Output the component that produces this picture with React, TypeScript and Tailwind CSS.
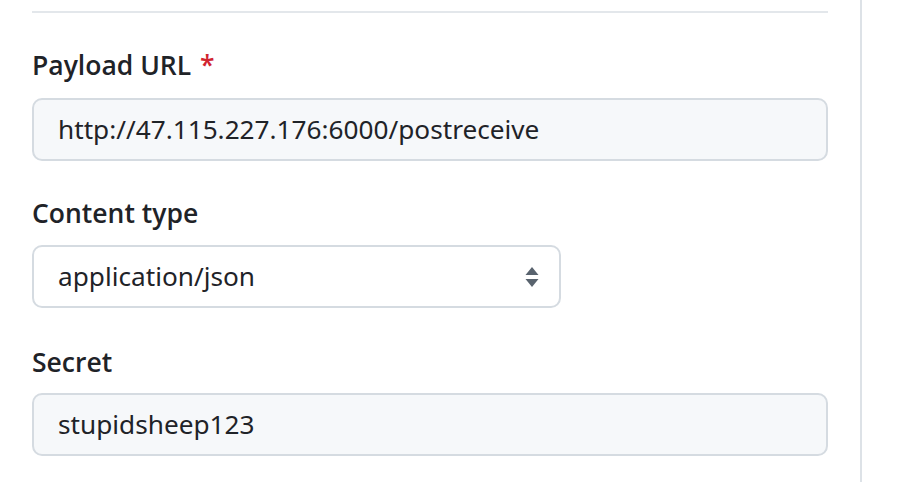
import React from "react";

function SelectArrows() {
  return (
    <svg width="14" height="22" viewBox="0 0 14 22" className="shrink-0">
      <path d="M0.5 9 L7 1 L13.5 9 Z" fill="#59636e" />
      <path d="M0.5 13 L13.5 13 L7 21 Z" fill="#59636e" />
    </svg>
  );
}

export default function App() {
  return (
    <div
      className="w-[909px] h-[482px] bg-white flex overflow-hidden text-[#1f2328]"
      style={{ fontFamily: '"Noto Sans", "Open Sans", sans-serif' }}
    >
      <div className="w-[860px] shrink-0 px-[32px] pt-[11px]">
        <div className="h-[2px] bg-[#e3e7eb]" />
        <div className="mt-[34px] flex flex-col">
          <div
            className="h-[36px] text-[26.5px] leading-[36px] font-semibold"
            style={{ fontFamily: '"Open Sans", "Noto Sans", sans-serif' }}
          >
            Payload URL <span className="ml-[2px] text-[#d1242f]">*</span>
          </div>
          <div className="mt-[15px] h-[63px] rounded-[10px] border-[2px] border-[#d5dbe1] bg-[#f6f8fa] flex items-center px-[24px] text-[26.2px]">
            http://47.115.227.176:6000/postreceive
          </div>

          <div
            className="mt-[34px] h-[36px] text-[26.5px] leading-[36px] font-semibold"
            style={{ fontFamily: '"Open Sans", "Noto Sans", sans-serif' }}
          >
            Content type
          </div>
          <div className="mt-[14px] w-[529px] h-[63px] rounded-[10px] border-[2px] border-[#d5dbe1] bg-white flex items-center justify-between pl-[24px] pr-[20px] text-[26.2px]">
            <span>application/json</span>
            <SelectArrows />
          </div>

          <div
            className="mt-[36px] h-[36px] text-[26.5px] leading-[36px] font-semibold"
            style={{ fontFamily: '"Open Sans", "Noto Sans", sans-serif' }}
          >
            Secret
          </div>
          <div className="mt-[13px] h-[63px] rounded-[10px] border-[2px] border-[#d5dbe1] bg-[#f6f8fa] flex items-center px-[24px] text-[26.2px]">
            stupidsheep123
          </div>
        </div>
      </div>
      <div className="w-[2px] h-full bg-[#dde2e7]" />
      <div className="flex-1" />
    </div>
  );
}
